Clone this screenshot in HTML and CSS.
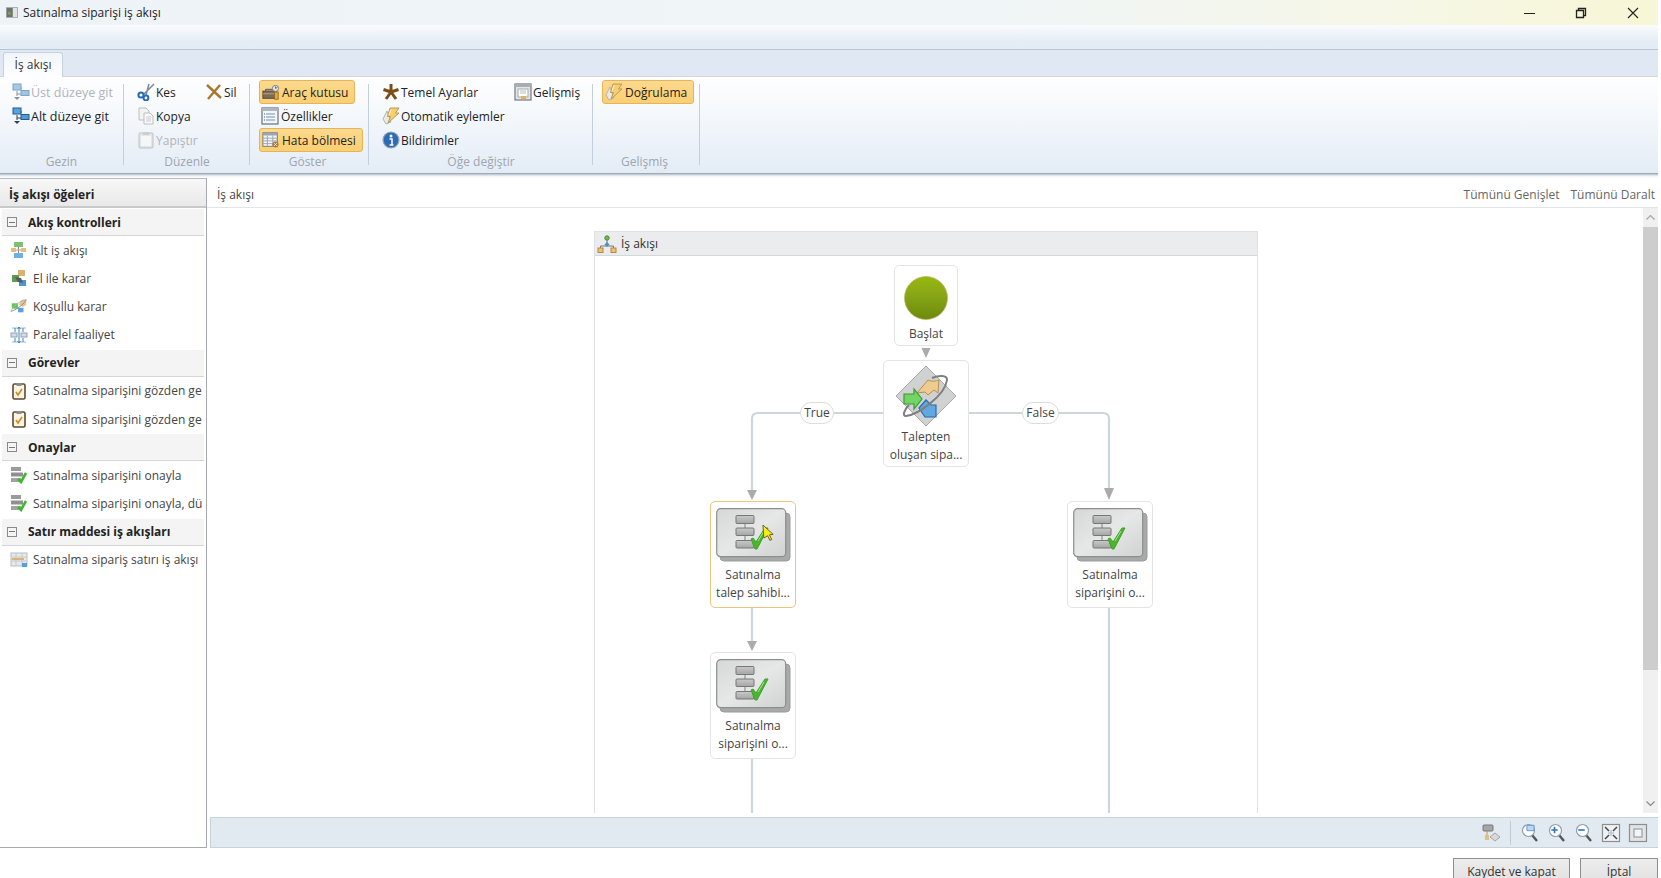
FILE: index.html
```html
<!DOCTYPE html>
<html lang="tr">
<head>
    <meta charset="UTF-8">
    <meta name="viewport" content="width=device-width, initial-scale=1.0">
    <title>Satınalma siparişi iş akışı</title>
    <link rel="stylesheet" href="styles.css">
</head>
<body>
    <svg class="sprites" width="0" height="0">
        <defs>
            <linearGradient id="ballFill" x1="0" y1="0" x2="0" y2="1">
                <stop offset="0" stop-color="#97b812"/>
                <stop offset="0.5" stop-color="#85a315"/>
                <stop offset="1" stop-color="#6b8a0c"/>
            </linearGradient>
            <linearGradient id="cardFill" x1="0" y1="0" x2="1" y2="1">
                <stop offset="0" stop-color="#d6d7d7"/>
                <stop offset="0.5" stop-color="#e6e7e7"/>
                <stop offset="1" stop-color="#d0d1d1"/>
            </linearGradient>
            <linearGradient id="flowBox" x1="0" y1="0" x2="0" y2="1">
                <stop offset="0" stop-color="#c9c9c9"/>
                <stop offset="1" stop-color="#a5a5a5"/>
            </linearGradient>

            <symbol id="i-flow" viewBox="0 0 18 18">
                <path d="M5 8v5M5 5h5M10 11H5" stroke="#33414f" fill="none"/>
                <rect x="1" y="1" width="8" height="6" fill="#5aa3dd" stroke="#1f5a93"/>
                <rect x="9" y="7.500" width="8" height="5" fill="#4f9bd8" stroke="#1f5a93"/>
                <path d="M2 14h6l-3 3z" fill="#33414f"/>
            </symbol>
            <symbol id="i-scissors" viewBox="0 0 18 18">
                <path d="M17 1L7 11M12 1L9 12" stroke="#7b8a99" stroke-width="1.500" fill="none"/>
                <circle cx="4" cy="12" r="2.600" fill="none" stroke="#2a68b8" stroke-width="2"/>
                <circle cx="9" cy="15" r="2.400" fill="none" stroke="#2a68b8" stroke-width="2"/>
            </symbol>
            <symbol id="i-x" viewBox="0 0 18 18">
                <path d="M2 2l14 13M15 2L3 16" stroke="#a9772c" stroke-width="2.400" fill="none"/>
            </symbol>
            <symbol id="i-copy" viewBox="0 0 18 18">
                <path d="M2 1h7l3 3v9H2z" fill="#f3f3f3" stroke="#bdbdbd"/>
                <path d="M7 6h6l3 3v8H7z" fill="#fafafa" stroke="#bdbdbd"/>
                <path d="M9 10h5M9 12h5M9 14h5" stroke="#c9c9c9"/>
            </symbol>
            <symbol id="i-paste" viewBox="0 0 18 18">
                <rect x="2" y="2" width="14" height="15" rx="1" fill="#dcdcd8" stroke="#9b9b96"/>
                <rect x="4" y="5" width="10" height="10" fill="#fbfbfb"/>
                <rect x="6" y="1" width="6" height="3" fill="#b0b0aa"/>
            </symbol>
            <symbol id="i-toolbox" viewBox="0 0 20 18">
                <rect x="1" y="8" width="15" height="8" fill="#7d6a58" stroke="#4f4438"/>
                <path d="M1 11h15" stroke="#c9a66b"/>
                <path d="M4 8V6h9v2" fill="#8d8d8d" stroke="#565656"/>
                <circle cx="15" cy="5" r="3.400" fill="#e7e7e7" stroke="#777"/>
                <path d="M15 3v2l2-1" stroke="#555" fill="none"/>
                <rect x="14" y="9" width="4" height="8" fill="#e9a93a" stroke="#8a6a2e"/>
            </symbol>
            <symbol id="i-props" viewBox="0 0 18 18">
                <rect x="1" y="1" width="16" height="16" fill="#f3f5f7" stroke="#6a7078" stroke-width="1.200"/>
                <rect x="1" y="1" width="16" height="3" fill="#aeb6bf"/>
                <path d="M5 7h9M5 10h9M5 13h9" stroke="#6f93b7"/>
                <path d="M3 7h1M3 10h1M3 13h1" stroke="#556"/>
            </symbol>
            <symbol id="i-errors" viewBox="0 0 20 18">
                <rect x="1" y="1" width="16" height="15" fill="#f4f5f6" stroke="#6a7078"/>
                <rect x="1" y="1" width="16" height="3" fill="#9da7b1"/>
                <path d="M1 7h16M1 10h16M1 13h16M6 4v12M12 4v12" stroke="#98a2ac"/>
                <circle cx="15" cy="14" r="3.400" fill="#a97a3a"/>
                <path d="M13.600 12.600l2.800 2.800M16.400 12.600l-2.800 2.800" stroke="#fff"/>
            </symbol>
            <symbol id="i-star" viewBox="0 0 18 18">
                <path d="M9 9V1M9 9l7.500-2.500M9 9l5 7M9 9l-5 7M9 9L1.500 6.500" stroke="#7a4e18" stroke-width="3" fill="none"/>
            </symbol>
            <symbol id="i-bolt" viewBox="0 0 18 18">
                <path d="M5 4L1 12l3 5 5-2z" fill="#e9e9e6" stroke="#b5b5b0"/>
                <path d="M8 1h9l-3.500 5H17L6 16l2.500-6.500H5.500z" fill="#f5cf72" stroke="#bd9a55"/>
                <path d="M9 2.500l-2 5.500" stroke="#fff3cf" fill="none"/>
            </symbol>
            <symbol id="i-info" viewBox="0 0 18 18">
                <circle cx="9" cy="9" r="8" fill="#2d6bb5" stroke="#9aa7b5" stroke-width="1.200"/>
                <circle cx="9" cy="5" r="1.500" fill="#fff"/>
                <path d="M7.500 8h2.500v5.500M7.500 14h4" stroke="#fff" stroke-width="1.500" fill="none"/>
            </symbol>
            <symbol id="i-form" viewBox="0 0 18 18">
                <rect x="1" y="1" width="16" height="16" fill="#e4e6e8" stroke="#73787e" stroke-width="1.200"/>
                <rect x="1" y="1" width="16" height="3" fill="#a5adb5"/>
                <rect x="4" y="6" width="10" height="8" fill="#fff" stroke="#a4a9ae"/>
                <path d="M6 8h6M6 10h6" stroke="#b9bcbf"/>
                <rect x="7" y="13" width="5" height="3" fill="#e3b15a"/>
            </symbol>

            <symbol id="i-subflow" viewBox="0 0 18 18">
                <rect x="4" y="1" width="9" height="5" fill="#7bc074"/>
                <path d="M8.500 6v7" stroke="#8a8a8a"/>
                <rect x="1" y="7" width="5" height="4" fill="#e4bd80"/>
                <rect x="11" y="7" width="5" height="4" fill="#e4bd80"/>
                <path d="M6 9h5" stroke="#c7a060"/>
                <rect x="4" y="12" width="9" height="5" fill="#6cb0e4"/>
            </symbol>
            <symbol id="i-manual" viewBox="0 0 18 18">
                <rect x="8" y="1" width="7" height="6" fill="#d9b271"/>
                <rect x="2" y="6" width="7" height="7" fill="#5e9a58"/>
                <rect x="9" y="11" width="7" height="6" fill="#4c94d8"/>
                <path d="M5 8l6 1 2 5-5-1z" fill="#5a5a5a"/>
            </symbol>
            <symbol id="i-cond" viewBox="0 0 20 18">
                <rect x="2" y="6" width="7" height="6" fill="#66c65c"/>
                <path d="M10 7l3-5h5v6l-4 2z" fill="#e6c48c"/>
                <path d="M9 11h6v5H9z" fill="#5aa0dc"/>
                <path d="M1 15C6 14 17 6 18 2" stroke="#8c8c8c" fill="none"/>
                <path d="M1 15C3 9 13 2 18 2" stroke="#b0b0b0" fill="none"/>
            </symbol>
            <symbol id="i-parallel" viewBox="0 0 18 18">
                <path d="M2 2h14M2 16h14" stroke="#9ab8d4" fill="none"/>
                <rect x="1" y="7" width="6" height="4" fill="#d5dce3" stroke="#8fa3b5"/>
                <rect x="11" y="7" width="6" height="4" fill="#d5dce3" stroke="#8fa3b5"/>
                <path d="M9 1v16M5 12v4M13 12v4M5 2v4M13 2v4" stroke="#3d85c6"/>
                <path d="M7.500 3L9 1l1.500 2M7.500 15L9 17l1.500-2" stroke="#3d85c6" fill="none"/>
            </symbol>
            <symbol id="i-task" viewBox="0 0 18 18">
                <rect x="3" y="2" width="12" height="15" rx="1.500" fill="#fcf6e6" stroke="#5d4a33" stroke-width="1.600"/>
                <rect x="6.500" y="1" width="5" height="3" fill="#8d8d8d"/>
                <path d="M6 10l2 3 4-6" stroke="#d08b1e" stroke-width="1.600" fill="none"/>
            </symbol>
            <symbol id="i-approve" viewBox="0 0 18 18">
                <rect x="1" y="1" width="10" height="4" fill="#9a9a9a"/>
                <rect x="1" y="6.500" width="12" height="4" fill="#8f8f8f"/>
                <rect x="1" y="12" width="10" height="4" fill="#a3a3a3"/>
                <path d="M8 13l3 3 5-9" stroke="#3cb82c" stroke-width="2.600" fill="none"/>
            </symbol>
            <symbol id="i-lineflow" viewBox="0 0 18 18">
                <rect x="1" y="2" width="16" height="13" fill="#e7e9ea" stroke="#b9bdc0"/>
                <path d="M1 6h16M1 10h16M6 2v13M12 2v13" stroke="#c6cacd"/>
                <path d="M2 8h12" stroke="#dcb47a" stroke-width="2"/>
                <rect x="12" y="12" width="5" height="4" fill="#5a9edb"/>
            </symbol>

            <symbol id="i-tree" viewBox="0 0 20 18">
                <circle cx="10" cy="3" r="2.200" fill="#72b850" stroke="#4d8b36"/>
                <path d="M10 5v4M3.500 13v-2h13v2" stroke="#777" fill="none"/>
                <path d="M10 7l2.500 2.500L10 12 7.500 9.500z" fill="#4a90d0"/>
                <rect x="1" y="13" width="5" height="4.500" fill="#eac27c" stroke="#b8873a"/>
                <rect x="14" y="13" width="5" height="4.500" fill="#eac27c" stroke="#b8873a"/>
            </symbol>
            <symbol id="i-card" viewBox="0 0 75 54">
                <rect x="4" y="5" width="70" height="48" rx="4" fill="#a8a9a9" stroke="#9a9b9b"/>
                <rect x="0.700" y="0.700" width="69" height="48" rx="4" fill="url(#cardFill)" stroke="#8d8e8e" stroke-width="1.200"/>
                <path d="M29 15v6M29 27v6" stroke="#808080"/>
                <rect x="20" y="7.500" width="18" height="8" rx="1" fill="url(#flowBox)" stroke="#777"/>
                <rect x="20" y="20" width="18" height="7.500" rx="1" fill="url(#flowBox)" stroke="#777"/>
                <rect x="20" y="32.500" width="18" height="7.500" rx="1" fill="url(#flowBox)" stroke="#777"/>
                <path d="M35 31l2-1 3 4 9-14h3L41 41h-2z" fill="#4ab62e" stroke="#3ea326"/>
                <path d="M42 33l6-10" stroke="#a6e095"/>
            </symbol>
            <symbol id="i-decision" viewBox="0 0 62 62">
                <path d="M31 1l30 30-30 30L1 31z" fill="#d0d1d1" stroke="#a9aaaa"/>
                <path d="M35 16c4 2 8 1 11 0l-1 13-4-3-6 5-3-3-8 1z" fill="#eecb8f" stroke="#b88f50" transform="translate(-2 -1)"/>
                <path d="M9 29h10v-5l8 10-8 10v-5H9z" fill="#74d463" stroke="#3d9a38" stroke-width="1.200"/>
                <path d="M24 43l7-8 5 5h5v12H30z" fill="#62a8e0" stroke="#2a6bad" stroke-width="1.200"/>
                <path d="M11 51C22 50 50 31 52 15c.5-5-8-5-15-2" fill="none" stroke="#7e7f7f" stroke-width="2"/>
                <path d="M11 51c-4 0-2-6 3-11" fill="none" stroke="#7e7f7f" stroke-width="2"/>
            </symbol>

            <symbol id="i-lens" viewBox="0 0 18 20">
                <path d="M11 12l5 6" stroke="#555" stroke-width="2.400"/>
                <circle cx="7.500" cy="7.500" r="6" fill="#fff" stroke="#8fa0ae" stroke-width="1.200"/>
            </symbol>
        </defs>
    </svg>

    <div class="window">
        <header class="titlebar">
            <svg class="app-icon" viewBox="0 0 16 14">
                <rect x="0.500" y="0.500" width="15" height="13" fill="#e3e3e3" stroke="#9a9a9a"/>
                <rect x="1" y="1" width="8" height="12" fill="#6d7469"/>
                <rect x="3" y="6" width="3" height="4" fill="#89a05f"/>
            </svg>
            <span class="title-text">Satınalma siparişi iş akışı</span>
            <div class="win-controls">
                <svg viewBox="0 0 14 14"><path d="M2 7.500h11" stroke="#222" fill="none"/></svg>
                <svg viewBox="0 0 14 14"><path d="M2.500 4.500h7v7h-7zM4.500 4.500v-2h7v7h-2" stroke="#222" stroke-width="1.300" fill="none"/></svg>
                <svg viewBox="0 0 14 14"><path d="M2 2l10 10M12 2L2 12" stroke="#222" stroke-width="1.100" fill="none"/></svg>
            </div>
        </header>
        <div class="band"></div>
        <div class="tabstrip">
            <div class="tab">İş akışı</div>
        </div>

        <div class="ribbon">
            <section class="rib-group group-nav">
                <div class="rib-items">
                    <div class="rib-item disabled"><svg class="ico"><use href="#i-flow"/></svg>Üst düzeye git</div>
                    <div class="rib-item"><svg class="ico"><use href="#i-flow"/></svg>Alt düzeye git</div>
                </div>
                <div class="rib-label">Gezin</div>
            </section>
            <div class="rib-sep"></div>
            <section class="rib-group group-edit">
                <div class="rib-items two-col">
                    <div class="rib-item"><svg class="ico"><use href="#i-scissors"/></svg>Kes</div>
                    <div class="rib-item"><svg class="ico"><use href="#i-x"/></svg>Sil</div>
                    <div class="rib-item"><svg class="ico"><use href="#i-copy"/></svg>Kopya</div>
                    <div class="rib-item cell-empty"></div>
                    <div class="rib-item disabled"><svg class="ico"><use href="#i-paste"/></svg>Yapıştır</div>
                </div>
                <div class="rib-label">Düzenle</div>
            </section>
            <div class="rib-sep"></div>
            <section class="rib-group group-view">
                <div class="rib-items">
                    <div class="rib-item active"><svg class="ico"><use href="#i-toolbox"/></svg>Araç kutusu</div>
                    <div class="rib-item"><svg class="ico"><use href="#i-props"/></svg>Özellikler</div>
                    <div class="rib-item active"><svg class="ico"><use href="#i-errors"/></svg>Hata bölmesi</div>
                </div>
                <div class="rib-label">Göster</div>
            </section>
            <div class="rib-sep"></div>
            <section class="rib-group group-change">
                <div class="rib-items two-col">
                    <div class="rib-item"><svg class="ico"><use href="#i-star"/></svg>Temel Ayarlar</div>
                    <div class="rib-item"><svg class="ico"><use href="#i-form"/></svg>Gelişmiş</div>
                    <div class="rib-item"><svg class="ico"><use href="#i-bolt"/></svg>Otomatik eylemler</div>
                    <div class="rib-item cell-empty"></div>
                    <div class="rib-item"><svg class="ico"><use href="#i-info"/></svg>Bildirimler</div>
                </div>
                <div class="rib-label">Öğe değiştir</div>
            </section>
            <div class="rib-sep"></div>
            <section class="rib-group group-adv">
                <div class="rib-items">
                    <div class="rib-item active"><svg class="ico"><use href="#i-bolt"/></svg>Doğrulama</div>
                </div>
                <div class="rib-label">Gelişmiş</div>
            </section>
            <div class="rib-sep"></div>
        </div>
        <div class="ribbon-edge"></div>

        <div class="workspace">
            <aside class="toolbox">
                <div class="toolbox-head">İş akışı öğeleri</div>

                <div class="tool-section"><span class="collapse"></span>Akış kontrolleri</div>
                <div class="tool-item"><svg class="ico"><use href="#i-subflow"/></svg>Alt iş akışı</div>
                <div class="tool-item"><svg class="ico"><use href="#i-manual"/></svg>El ile karar</div>
                <div class="tool-item"><svg class="ico"><use href="#i-cond"/></svg>Koşullu karar</div>
                <div class="tool-item"><svg class="ico"><use href="#i-parallel"/></svg>Paralel faaliyet</div>

                <div class="tool-section"><span class="collapse"></span>Görevler</div>
                <div class="tool-item"><svg class="ico"><use href="#i-task"/></svg>Satınalma siparişini gözden ge</div>
                <div class="tool-item"><svg class="ico"><use href="#i-task"/></svg>Satınalma siparişini gözden ge</div>

                <div class="tool-section"><span class="collapse"></span>Onaylar</div>
                <div class="tool-item"><svg class="ico"><use href="#i-approve"/></svg>Satınalma siparişini onayla</div>
                <div class="tool-item"><svg class="ico"><use href="#i-approve"/></svg>Satınalma siparişini onayla, dü</div>

                <div class="tool-section"><span class="collapse"></span>Satır maddesi iş akışları</div>
                <div class="tool-item"><svg class="ico"><use href="#i-lineflow"/></svg>Satınalma sipariş satırı iş akışı</div>
            </aside>

            <main class="editor">
                <div class="editor-head">
                    <span>İş akışı</span>
                    <div class="editor-links">
                        <span>Tümünü Genişlet</span>
                        <span>Tümünü Daralt</span>
                    </div>
                </div>

                <div class="canvas-row">
                    <div class="canvas">
                        <div class="flow-panel">
                            <div class="flow-title"><svg class="tree-ico"><use href="#i-tree"/></svg>İş akışı</div>
                            <div class="flow-body">
                                <svg class="wires" viewBox="0 0 662 560">
                                    <g class="wire">
                                        <path d="M288 157H163q-6 0-6 6v71"/>
                                        <path d="M374 157h134q6 0 6 6v69"/>
                                        <path d="M157 352v33"/>
                                        <path d="M157 503v60"/>
                                        <path d="M514 352v210"/>
                                    </g>
                                    <g class="arrow">
                                        <path d="M326.500 92h9l-4.500 10z"/>
                                        <path d="M152 234h10l-5 10z"/>
                                        <path d="M509 232h10l-5 12z"/>
                                        <path d="M152 385h10l-5 10z"/>
                                    </g>
                                </svg>

                                <div class="pill pill-true">True</div>
                                <div class="pill pill-false">False</div>

                                <div class="node node-start">
                                    <svg class="ball" viewBox="0 0 44 44"><circle cx="22" cy="22" r="21.500" fill="url(#ballFill)" stroke="#c3ad5e" stroke-width="0.700"/></svg>
                                    <div>Başlat</div>
                                </div>
                                <div class="node node-decision">
                                    <svg class="decision-ico"><use href="#i-decision"/></svg>
                                    <div>Talepten</div>
                                    <div>oluşan sipa...</div>
                                </div>
                                <div class="node node-left selected">
                                    <svg class="card-ico"><use href="#i-card"/></svg>
                                    <div>Satınalma</div>
                                    <div>talep sahibi...</div>
                                    <svg class="cursor" viewBox="0 0 14 18"><path d="M1 1l11 10-4 .5 2.500 5-2 1-2.500-5L2 15z" fill="#f4ea1e" stroke="#6b5a10"/></svg>
                                </div>
                                <div class="node node-right">
                                    <svg class="card-ico"><use href="#i-card"/></svg>
                                    <div>Satınalma</div>
                                    <div>siparişini o...</div>
                                </div>
                                <div class="node node-third">
                                    <svg class="card-ico"><use href="#i-card"/></svg>
                                    <div>Satınalma</div>
                                    <div>siparişini o...</div>
                                </div>
                            </div>
                        </div>
                    </div>
                    <div class="scrollbar">
                        <svg viewBox="0 0 15 15"><path d="M3.500 9.500l4-4 4 4" stroke="#a6a6a6" fill="none" stroke-width="1.200"/></svg>
                        <div class="scroll-track"><div class="scroll-thumb"></div></div>
                        <svg viewBox="0 0 15 15"><path d="M3.500 5.500l4 4 4-4" stroke="#8a8a8a" fill="none" stroke-width="1.200"/></svg>
                    </div>
                </div>

                <div class="statusbar">
                    <svg class="bar-ico" viewBox="0 0 20 20">
                        <rect x="2" y="2" width="10" height="6" rx="1" fill="#a6a6a6" stroke="#777"/>
                        <path d="M6 8v7" stroke="#c49a52"/>
                        <path d="M14 10l5 4-5 4-5-4z" fill="#d8d8d8" stroke="#a4a4a4"/>
                        <rect x="4" y="12" width="4" height="5" fill="#e4bd80"/>
                    </svg>
                    <span class="bar-sep"></span>
                    <span class="lens-wrap"><svg class="bar-ico"><use href="#i-lens"/></svg><svg class="lens-mark" viewBox="0 0 10 8"><path d="M1 1h8v6H1z" fill="#bcd8ef" stroke="#5c93c4"/></svg></span>
                    <span class="lens-wrap"><svg class="bar-ico"><use href="#i-lens"/></svg><svg class="lens-mark mark-center" viewBox="0 0 10 10"><path d="M1 5h8M5 1v8" stroke="#2c74bd" stroke-width="2"/></svg></span>
                    <span class="lens-wrap"><svg class="bar-ico"><use href="#i-lens"/></svg><svg class="lens-mark mark-center" viewBox="0 0 10 10"><path d="M1 5h8" stroke="#2c74bd" stroke-width="2"/></svg></span>
                    <svg class="bar-ico" viewBox="0 0 20 20">
                        <rect x="1.500" y="1.500" width="17" height="17" fill="#f0f1f2" stroke="#8a8f94" stroke-width="1.200"/>
                        <path d="M4 4l4 4M16 4l-4 4M4 16l4-4M16 16l-4-4" stroke="#454545" stroke-width="1.500"/>
                        <path d="M10 7v6M7 10h6" stroke="#b9c6d2" stroke-width="1.500"/>
                    </svg>
                    <svg class="bar-ico" viewBox="0 0 20 20">
                        <rect x="1.500" y="1.500" width="17" height="17" fill="#e1e3e5" stroke="#8a8f94" stroke-width="1.200"/>
                        <rect x="6" y="6" width="8" height="8" fill="#f4f5f6" stroke="#8a8f94"/>
                    </svg>
                </div>
            </main>
        </div>

        <footer class="actions">
            <button class="btn btn-save">Kaydet ve kapat</button>
            <button class="btn btn-cancel">İptal</button>
        </footer>
    </div>
</body>
</html>
```

FILE: styles.css
```css
* {
    box-sizing: border-box;
}
html, body {
    margin: 0;
    height: 100%;
    background: #fff;
    overflow: hidden;
}
body {
    font-family: "Open Sans", "Noto Sans", sans-serif;
    font-size: 12px;
    color: #333;
}
.sprites {
    position: absolute;
}
.window {
    width: 1658px;
    height: 878px;
    display: flex;
    flex-direction: column;
    overflow: hidden;
}
.window > * {
    flex: none;
}

/* title */
.titlebar {
    height: 25px;
    display: flex;
    align-items: center;
    padding-left: 6px;
    background: linear-gradient(90deg, #eef3f8 0%, #f0f5f7 60%, #f6f7e6 85%, #f7f6d6 100%);
}
.app-icon {
    width: 12px;
    height: 13px;
    margin-right: 5px;
}
.title-text {
    font-size: 12px;
    color: #222;
}
.win-controls {
    margin-left: auto;
    display: flex;
    align-items: center;
}
.win-controls svg {
    width: 14px;
    height: 14px;
    margin-right: 38px;
}
.win-controls svg:last-child {
    margin-right: 18px;
}
.band {
    height: 25px;
    background: linear-gradient(180deg, #fafcfe 0%, #e4ecf5 70%, #e4ecf5 100%);
    border-bottom: 1px solid #b8c6d4;
}
.tabstrip {
    height: 27px;
    padding: 2px 0 0 3px;
    background: #dfe8f3;
    border-bottom: 1px solid #cfd9e4;
}
.tab {
    width: 60px;
    height: 25px;
    line-height: 24px;
    text-align: center;
    background: linear-gradient(180deg, #f2f6fa, #fdfeff);
    border: 1px solid #c5d1dd;
    border-bottom: none;
    border-radius: 3px 3px 0 0;
    color: #333;
}

/* ribbon */
.ribbon {
    height: 96px;
    display: flex;
    padding-top: 3px;
    background: linear-gradient(180deg, #fefeff 0%, #f6f9fc 35%, #e3ecf6 100%);
}
.rib-group {
    display: flex;
    flex-direction: column;
}
.group-nav {
    width: 123px;
    padding-left: 12px;
    font-size: 12.5px;
}
.group-edit {
    width: 125px;
    padding-left: 13px;
}
.group-view {
    width: 118px;
    padding-left: 9px;
}
.group-change {
    width: 223px;
    padding-left: 13px;
}
.group-adv {
    width: 106px;
    padding-left: 9px;
}
.group-adv .rib-item {
    gap: 2px;
}
.rib-sep {
    width: 1px;
    height: 81px;
    margin-top: 4px;
    background: #c3cfda;
}
.rib-items {
    height: 72px;
    display: grid;
    grid-template-rows: repeat(3, 24px);
    align-content: start;
    justify-items: start;
}
.two-col {
    grid-template-columns: auto auto;
    justify-content: start;
}
.group-edit .two-col {
    grid-template-columns: 68px auto;
}
.group-change .two-col {
    grid-template-columns: 132px auto;
}
.rib-item {
    height: 24px;
    display: flex;
    align-items: center;
    white-space: nowrap;
    color: #222;
    gap: 1px;
}
.rib-item.disabled {
    color: #b0b4b8;
}
.rib-item.disabled .ico {
    opacity: 0.55;
}
.rib-item.active {
    padding: 0 6px 0 2px;
    background: linear-gradient(180deg, #fbd98e, #fbcf72);
    border: 1px solid #e3b45a;
    border-radius: 3px;
}
.group-view .rib-item {
    gap: 2px;
    padding-left: 2px;
}
.group-view .rib-item.active {
    padding-left: 2px;
}
.cell-empty {
    width: 0;
}
.rib-label {
    height: 20px;
    line-height: 20px;
    text-align: center;
    font-size: 12px;
    color: #9ea6ad;
    padding-right: 12px;
}
.ico {
    width: 18px;
    height: 18px;
    flex: none;
}
.ribbon-edge {
    height: 5px;
    background: linear-gradient(180deg, #8e9aa5 0%, #c3ccd4 30%, #eef1f4 60%, #fff 100%);
}

/* left toolbox */
.workspace {
    height: 670px;
    display: flex;
}
.toolbox {
    width: 207px;
    flex: none;
    background: #fff;
    border-right: 1px solid #a5a9ad;
    border-bottom: 1px solid #a5a9ad;
    overflow: hidden;
}
.toolbox-head {
    height: 30px;
    line-height: 31px;
    padding-left: 9px;
    font-weight: 700;
    color: #222;
    background: linear-gradient(180deg, #f7f7f7, #e9e9e9);
    border-top: 1px solid #b9bcbf;
    border-bottom: 2px solid #c8c9ca;
}
.tool-section {
    height: 27px;
    margin: 1px 2px 0 2px;
    display: flex;
    align-items: center;
    font-weight: 700;
    color: #222;
    background: #f4f4f4;
    border-bottom: 1px solid #d6d6d6;
}
.collapse {
    width: 10px;
    height: 10px;
    margin: 0 11px 0 5px;
    border: 1px solid #8a8a8a;
    background: linear-gradient(#777, #777) center / 6px 1px no-repeat;
}
.tool-item {
    height: 28.2px;
    display: flex;
    align-items: center;
    padding-left: 10px;
    gap: 5px;
    color: #444;
    white-space: nowrap;
    width: 204px;
}

/* editor */
.editor {
    flex: 1;
    min-width: 0;
    display: flex;
    flex-direction: column;
}
.editor-head {
    height: 30px;
    flex: none;
    display: flex;
    justify-content: space-between;
    align-items: center;
    padding: 3px 3px 0 10px;
    border-bottom: 1px solid #e3e6e9;
    color: #444;
}
.editor-links {
    display: flex;
    gap: 11px;
    color: #666;
}
.canvas-row {
    height: 605px;
    flex: none;
    display: flex;
}
.canvas {
    flex: 1;
    min-width: 0;
    padding: 23px 0 0 387px;
    overflow: hidden;
}
.flow-panel {
    width: 664px;
    height: 600px;
    border: 1px solid #dfe2e5;
    border-bottom: none;
}
.flow-title {
    height: 24px;
    display: flex;
    align-items: center;
    gap: 4px;
    padding-left: 2px;
    background: #ebeced;
    border-bottom: 1px solid #d5d8da;
    color: #333;
}
.tree-ico {
    width: 20px;
    height: 18px;
}
.flow-body {
    position: relative;
    height: 560px;
}
.wires {
    position: absolute;
    left: 0;
    top: 0;
    width: 662px;
    height: 560px;
}
.wire path {
    fill: none;
    stroke: #cdd6da;
    stroke-width: 2.2;
}
.arrow path {
    fill: #ababab;
}
.pill {
    position: absolute;
    top: 146px;
    height: 22px;
    line-height: 20px;
    text-align: center;
    background: #fff;
    border: 1px solid #dcdcdc;
    border-radius: 11px;
    color: #444;
}
.pill-true {
    left: 205px;
    width: 34px;
}
.pill-false {
    left: 427px;
    width: 37px;
}
.node {
    position: absolute;
    display: flex;
    flex-direction: column;
    align-items: center;
    line-height: 18px;
    background: #fff;
    border: 1px solid #e2e4e6;
    border-radius: 5px;
    color: #444;
    white-space: nowrap;
}
.node-start {
    left: 299px;
    top: 9px;
    width: 64px;
    height: 81px;
    padding-top: 10px;
}
.ball {
    width: 44px;
    height: 44px;
    margin-bottom: 5px;
}
.node-decision {
    left: 288px;
    top: 104px;
    width: 86px;
    height: 107px;
    padding-top: 4px;
}
.decision-ico {
    width: 62px;
    height: 62px;
    margin-bottom: 1px;
}
.card-ico {
    width: 75px;
    height: 54px;
    margin: 0 0 4px 1px;
    flex: none;
}
.node-left,
.node-right,
.node-third {
    height: 107px;
    width: 86px;
    padding-top: 6px;
}
.node-left {
    left: 115px;
    top: 245px;
}
.node-left.selected {
    border: 1.5px solid #eac77c;
}
.node-right {
    left: 472px;
    top: 245px;
}
.node-third {
    left: 115px;
    top: 396px;
}
.cursor {
    position: absolute;
    left: 51px;
    top: 22px;
    width: 13px;
    height: 17px;
}

/* scrollbar */
.scrollbar {
    width: 15px;
    flex: none;
    display: flex;
    flex-direction: column;
    background: #f0f0f0;
}
.scrollbar svg {
    width: 15px;
    height: 15px;
    flex: none;
    margin: 2px 0;
}
.scroll-track {
    flex: 1;
}
.scroll-thumb {
    height: 443px;
    background: #cdcdcd;
}

/* bottom */
.statusbar {
    height: 31px;
    flex: none;
    margin: 4px 0 0 3px;
    display: flex;
    align-items: center;
    justify-content: flex-end;
    padding-right: 10px;
    gap: 7px;
    background: #e1e9f1;
    border-top: 1px solid #c9d2da;
    border-bottom: 1px solid #c9d2da;
    border-left: 1px solid #c9d2da;
}
.bar-ico {
    width: 20px;
    height: 20px;
    flex: none;
}
.bar-sep {
    width: 1px;
    height: 24px;
    background: #c3ccd4;
    margin: 0 2px;
}
.lens-wrap {
    position: relative;
    width: 20px;
    height: 20px;
}
.lens-mark {
    position: absolute;
    left: 6px;
    top: 1px;
    width: 9px;
    height: 8px;
}
.mark-center {
    left: 3px;
    top: 3px;
}
.actions {
    height: 30px;
    display: flex;
    justify-content: flex-end;
    gap: 10px;
    padding-top: 10px;
    overflow: hidden;
}
.btn {
    height: 26px;
    flex: none;
    font: inherit;
    color: #333;
    background: linear-gradient(180deg, #ececec, #e2e2e2);
    border: 1px solid #8e8e8e;
    padding: 0;
}
.btn-save {
    width: 117px;
}
.btn-cancel {
    width: 78px;
}
```
